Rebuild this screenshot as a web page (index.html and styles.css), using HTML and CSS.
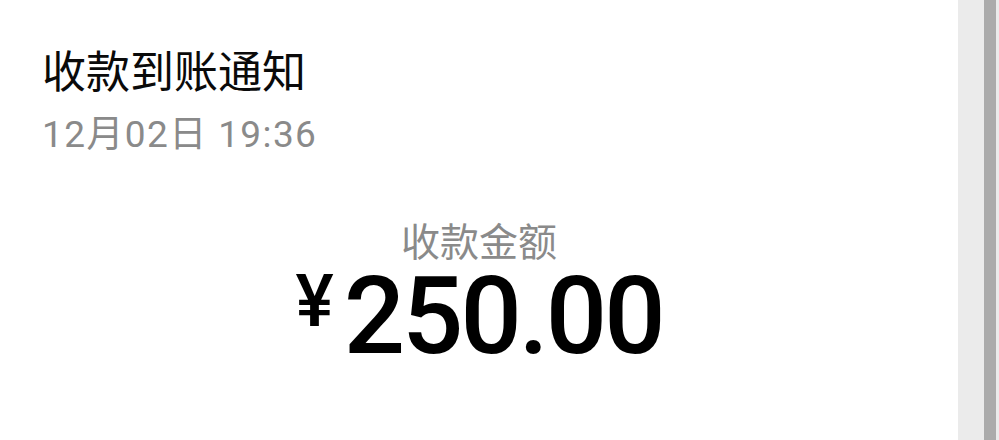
FILE: index.html
```html
<!DOCTYPE html>
<html lang="zh-CN">
<head>
  <meta charset="UTF-8" />
  <meta name="viewport" content="width=device-width, initial-scale=1.0"/>
  <title>收款到账通知</title>
  <link rel="stylesheet" href="styles.css">
</head>
<body>
  <div class="page">
    <div class="card">
      <h1 class="title">收款到账通知</h1>
      <div class="time">12月02日 19:36</div>
      <div class="amount-box">
        <div class="label">收款金额</div>
        <div class="amount">
          <span class="currency">¥</span>
          <span class="value">250.00</span>
        </div>
      </div>
    </div>
    <div class="sidebar">
      <div class="scroll-bar"></div>
    </div>
  </div>
</body>
</html>
```

FILE: styles.css
```css
* { box-sizing: border-box; margin: 0; padding: 0; }
html, body { height: 100%; overflow: hidden; }
body {
  background: #fff;
  font-family: Roboto, "Noto Sans CJK SC", sans-serif;
  color: #000;
}
.page { display: flex; height: 100%; }
.card { flex: 1; padding: 44px 0 0 42px; }
.title {
  font-size: 44px;
  font-weight: 400;
  line-height: 58px;
  color: #0a0a0a;
}
.time {
  margin-top: 11px;
  font-size: 37px;
  line-height: 44px;
  letter-spacing: 1.4px;
  color: #8a8a8a;
}
.amount-box {
  margin-top: 67px;
  margin-left: -42px;
  display: flex;
  flex-direction: column;
  align-items: center;
}
.label {
  font-size: 39px;
  line-height: 38px;
  color: #8a8a8a;
}
.amount {
  display: flex;
  align-items: flex-start;
}
.currency {
  font-size: 72px;
  font-weight: 500;
  line-height: 1;
  margin-right: 10px;
  margin-top: 4px;
}
.value {
  font-size: 108px;
  font-weight: 500;
  line-height: 1;
  letter-spacing: -3px;
}
.sidebar {
  width: 41px;
  background: #ebebeb;
  display: flex;
  justify-content: flex-end;
  padding-right: 3px;
}
.scroll-bar { width: 12px; background: #ababab; }
```
